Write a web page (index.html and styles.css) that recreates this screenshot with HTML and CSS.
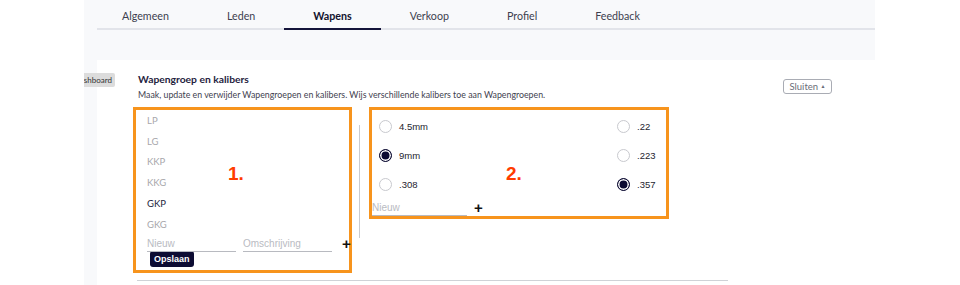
FILE: index.html
```html
<!DOCTYPE html>
<html lang="nl">
<head>
    <meta charset="UTF-8">
    <meta name="viewport" content="width=device-width, initial-scale=1.0">
    <title>Wapens</title>
    <link rel="stylesheet" href="styles.css">
</head>
<body>
    <div class="app">
        <div class="tip"><span>Dashboard</span></div>

        <nav class="tabs">
            <a class="tab">Algemeen</a>
            <a class="tab">Leden</a>
            <a class="tab active">Wapens</a>
            <a class="tab">Verkoop</a>
            <a class="tab">Profiel</a>
            <a class="tab">Feedback</a>
        </nav>

        <div class="card">
            <div class="card-head">
                <div>
                    <h2>Wapengroep en kalibers</h2>
                    <p class="desc">Maak, update en verwijder Wapengroepen en kalibers. Wijs verschillende kalibers toe aan Wapengroepen.</p>
                </div>
                <button class="toggle">Sluiten <span class="caret">&#9650;</span></button>
            </div>

            <div class="panels">
                <div class="box groups">
                    <ul class="group-list">
                        <li>LP</li>
                        <li>LG</li>
                        <li>KKP</li>
                        <li>KKG</li>
                        <li class="selected">GKP</li>
                        <li>GKG</li>
                    </ul>
                    <div class="new-row">
                        <input class="line-input short" type="text" placeholder="Nieuw">
                        <input class="line-input short" type="text" placeholder="Omschrijving">
                        <span class="plus">+</span>
                    </div>
                    <button class="save">Opslaan</button>
                    <span class="marker">1.</span>
                </div>

                <div class="divider"></div>

                <div class="box calibers">
                    <div class="caliber-grid">
                        <label class="radio"><span class="dot"></span>4.5mm</label>
                        <label class="radio"><span class="dot"></span>.22</label>
                        <label class="radio"><span class="dot on"></span>9mm</label>
                        <label class="radio"><span class="dot"></span>.223</label>
                        <label class="radio"><span class="dot"></span>.308</label>
                        <label class="radio"><span class="dot on"></span>.357</label>
                    </div>
                    <div class="new-row">
                        <input class="line-input wide" type="text" placeholder="Nieuw">
                        <span class="plus">+</span>
                    </div>
                    <span class="marker">2.</span>
                </div>
            </div>

            <div class="rule"></div>
        </div>
    </div>
</body>
</html>
```

FILE: styles.css
```css
body {
    margin: 0;
    background-color: #fff;
    font-family: 'Lato', 'Liberation Sans', sans-serif;
    overflow: hidden;
}
.app {
    position: relative;
    margin-left: 84px;
    width: 791px;
    height: 285px;
    background-color: #f8f9fb;
    overflow: hidden;
}
.tip {
    position: absolute;
    left: 0;
    top: 73px;
    width: 31px;
    height: 14px;
    overflow: hidden;
    background-color: #dcdcdc;
    border-radius: 0 2px 2px 0;
    z-index: 2;
}
.tip span {
    position: absolute;
    right: 3px;
    top: 0;
    font-size: 8px;
    line-height: 14px;
    color: #333;
    white-space: nowrap;
}
.tabs {
    display: flex;
    margin-left: 13px;
    height: 28px;
    border-bottom: 2px solid #e2e4ea;
}
.tab {
    display: block;
    padding: 0 29px;
    font-size: 10.7px;
    line-height: 32px;
    height: 28px;
    color: #3d3f4f;
}
.tab:first-child {
    padding-left: 25px;
}
.tab.active {
    font-weight: bold;
    color: #12122e;
    border-bottom: 2px solid #14143a;
}
.card {
    margin: 30px 0 0 13px;
    height: 230px;
    background-color: #fff;
    padding: 12px 43px 0 36px;
    box-sizing: border-box;
}
.card-head {
    display: flex;
    justify-content: space-between;
    align-items: flex-start;
    padding-left: 5px;
}
h2 {
    margin: 0;
    font-size: 10.3px;
    line-height: 14px;
    color: #1f2340;
}
.desc {
    margin: 3px 0 0;
    font-size: 8.8px;
    line-height: 12px;
    color: #3f4250;
}
.toggle {
    margin-top: 7px;
    height: 15px;
    width: 49px;
    padding: 0;
    border: 1px solid #a9acb4;
    border-radius: 3px;
    background: #fff;
    font-family: 'Lato', sans-serif;
    font-size: 9.5px;
    color: #6a6d78;
}
.caret {
    font-size: 5px;
    vertical-align: 2px;
}
.panels {
    display: flex;
    align-items: flex-start;
    margin-top: 6px;
}
.box {
    position: relative;
    border: 3px solid #f7941d;
    box-sizing: border-box;
}
.groups {
    width: 219px;
    height: 166px;
    padding-left: 11px;
}
.group-list {
    list-style: none;
    margin: 1px 0 0;
    padding: 0;
}
.group-list li {
    font-size: 9.5px;
    line-height: 20.7px;
    color: #a7a7ab;
}
.group-list li.selected {
    color: #1b1b3a;
}
.new-row {
    display: flex;
    align-items: center;
    gap: 7px;
}
.groups .new-row {
    margin-top: 1px;
}
.line-input {
    height: 16px;
    padding: 0;
    border: none;
    border-bottom: 1px solid #b8bac0;
    font-family: 'Liberation Sans', sans-serif;
    font-size: 10px;
    outline: none;
    box-sizing: border-box;
}
.line-input::placeholder {
    color: #b9bbc2;
}
.short {
    width: 89px;
}
.wide {
    width: 95px;
}
.plus {
    margin-left: 3px;
    font-family: 'Liberation Sans', sans-serif;
    font-size: 15px;
    font-weight: bold;
    line-height: 14px;
    color: #111;
}
.save {
    display: block;
    margin: -1px 0 0 3px;
    height: 16px;
    padding: 0 4px;
    border: none;
    border-radius: 3px;
    background-color: #0d0c33;
    color: #fff;
    font-family: 'Liberation Sans', sans-serif;
    font-size: 9px;
    font-weight: bold;
}
.marker {
    position: absolute;
    top: 53px;
    font-family: 'Liberation Sans', sans-serif;
    font-size: 19px;
    font-weight: bold;
    color: #ff3c00;
}
.groups .marker {
    left: 92px;
}
.calibers .marker {
    left: 134px;
}
.divider {
    width: 1px;
    height: 113px;
    margin: 18px 9px 0 7px;
    background-color: #c9cbd0;
}
.calibers {
    width: 300px;
    height: 112px;
}
.caliber-grid {
    display: grid;
    grid-template-columns: 238px 1fr;
    padding: 2px 0 0 7px;
}
.radio {
    display: flex;
    align-items: center;
    height: 29px;
    font-family: 'Liberation Sans', sans-serif;
    font-size: 9.5px;
    color: #1d1d2e;
}
.dot {
    width: 11px;
    height: 11px;
    margin-right: 7px;
    border: 1px solid #c8c9ce;
    border-radius: 50%;
    box-sizing: content-box;
    background-color: #fff;
}
.dot.on {
    border-color: #0d0c33;
    background-color: #0d0c33;
    box-shadow: inset 0 0 0 1.5px #fff;
}
.calibers .new-row {
    gap: 4px;
    margin-top: 1px;
}
.rule {
    margin: 7px 104px 0 4px;
    height: 1px;
    background-color: #cfd2d7;
}
```
